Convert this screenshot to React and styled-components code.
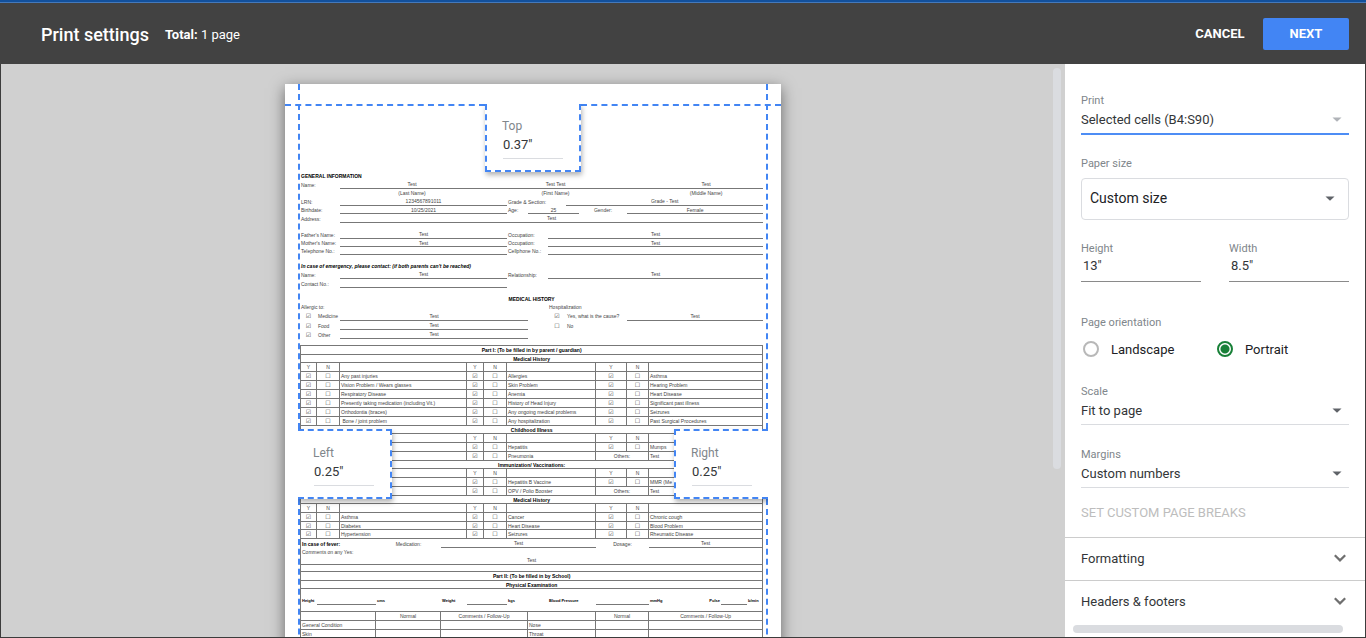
import { useState } from "react"
import styled, { createGlobalStyle, css } from "styled-components"

const GlobalStyle = createGlobalStyle`
*{
    box-sizing: border-box;
}
body{
    margin: 0;
    font-family: Roboto, "Liberation Sans", sans-serif;
    color: #333638;
}
button, input, select{
    font-family: inherit;
    color: inherit;
}
`

const Page = styled.div`
height: 100vh;
display: flex;
flex-direction: column;
overflow: hidden;
`
const TopStrip = styled.div`
height: 3px;
flex-shrink: 0;
background-color: #12509c;
border-bottom: 1px solid #4579ba;
`
const Header = styled.header`
height: 61px;
flex-shrink: 0;
display: flex;
align-items: center;
background-color: #424242;
color: #fff;
padding: 0 17px 0 41px;
`
const Title = styled.h1`
margin: 0;
padding-top: 2px;
font-size: 18px;
font-weight: 500;
line-height: 24px;
`
const Total = styled.p`
margin: 0 auto 0 16px;
padding-top: 2px;
font-size: 13px;
line-height: 20px;
`
const HeaderButton = styled.button`
height: 32px;
min-width: 86px;
border: 0;
border-radius: 2px;
padding: 0 18px;
background-color: ${({ $primary }) => ($primary ? "#4285f4" : "transparent")};
color: #fff;
font-size: 13px;
font-weight: 700;
cursor: pointer;
`
const Main = styled.main`
flex: 1;
min-height: 0;
display: flex;
border: solid #3c3c3c;
border-width: 0 1px 1px;
`

/* preview */
const Preview = styled.section`
flex: 1;
position: relative;
display: flex;
justify-content: center;
padding-top: 20px;
background-color: #d0d0d0;
overflow: hidden;
`
const VerticalThumb = styled.div`
position: absolute;
top: 4px;
right: 4px;
width: 8px;
height: 70%;
border-radius: 4px;
background-color: #dadce0;
`
const Paper = styled.div`
position: relative;
width: 496px;
height: 760px;
flex-shrink: 0;
padding: 87px 18px 0 15px;
background-color: #fff;
box-shadow: 0 4px 14px rgba(0, 0, 0, 0.5);
`
const Guide = styled.div`
position: absolute;
border: 0 dashed #4285f4;
${({ $row }) =>
  $row
    ? css`
top: 20px;
width: 200px;
border-top-width: 2px;
${$row}: 0;
`
    : css`
border-left-width: 2px;
`}
${({ $col }) => $col === "left" && css`left: 13px;`}
${({ $col }) => $col === "right" && css`right: 13px;`}
${({ $part }) => $part === "upper" && css`top: 0; height: 345px;`}
${({ $part }) => $part === "lower" && css`top: 415px; bottom: 0;`}
`
const openSide = { top: "top", left: "left", right: "right" }
const MarginBox = styled.label`
position: absolute;
display: flex;
flex-direction: column;
padding: 14px 15px 0;
background-color: #fff;
border: 2px dashed #4285f4;
border-${({ $side }) => openSide[$side]}: 0;
box-shadow: 1px 3px 5px rgba(0, 0, 0, 0.3);
clip-path: inset(${({ $side }) =>
  $side === "top" ? "0 -12px -12px -12px" : $side === "left" ? "-12px -12px -12px 0" : "-12px 0 -12px -12px"});
color: #80868b;
font-size: 12px;
line-height: 16px;
${({ $side }) => $side === "top" && css`top: 20px; left: 200px; width: 96px; height: 68px;`}
${({ $side }) => $side === "left" && css`top: 345px; left: 13px; width: 94px; height: 70px;`}
${({ $side }) => $side === "right" && css`top: 345px; right: 13px; width: 94px; height: 70px;`}
`
const MarginInput = styled.input`
width: 60px;
height: 25px;
margin-left: 1px;
padding: 0 0 4px;
border: 0;
border-bottom: 1px solid #dadce0;
background: transparent;
color: #333638;
font-size: 13px;
outline: none;
`

/* sheet */
const Sheet = styled.table`
width: 463px;
table-layout: fixed;
border-collapse: separate;
border-spacing: 0;
font-family: "Liberation Sans", Arial, sans-serif;
font-size: 5px;
line-height: 6px;
color: #444;
white-space: nowrap;
`
const Col = styled.col`
width: ${({ $w }) => $w}px;
`
const SheetRow = styled.tr`
height: ${({ $h }) => $h}px;
`
const Cell = styled.td`
padding: 0 1px;
border: 0 solid #777;
vertical-align: middle;
text-align: ${({ $f }) => ($f.includes("c") ? "center" : "left")};
${({ $f }) => $f.includes("b") && css`font-weight: 700; color: #000;`}
${({ $f }) => $f.includes("i") && css`font-style: italic;`}
${({ $f }) => $f.includes("s") && css`font-size: 4px;`}
${({ $f }) => $f.includes("u") && css`border-bottom-width: 1px;`}
${({ $f }) => $f.includes("l") && css`border-left-width: 1px;`}
${({ $f }) => $f.includes("r") && css`border-right-width: 1px;`}
`
const Mark = styled.span`
font-family: "DejaVu Sans", sans-serif;
font-size: 6px;
line-height: 6px;
display: block;
`
const Vitals = styled.div`
display: flex;
justify-content: space-between;
`

const columns = [17, 23, 36, 65, 26, 17, 23, 21, 20, 18, 13, 17, 31, 22, 72, 26, 16]
const ON = "☑"
const OFF = "☐"

// a cell is [span, text, flags]
// b bold, i italic, s small, c centre, u underline, l left line, r right line
const blank = (h, flags = "") => [h, [[17, "", flags]]]
const heading = (h, text) => [h, [[17, text, "bculr"]]]
const yn = (h, first = true) => [h, [
  [1, first ? "Y" : "", "culr"], [1, first ? "N" : "", "cur"], [3, "", "ur"],
  [1, "Y", "cur"], [1, "N", "cur"], [5, "", "ur"],
  [1, "Y", "cur"], [1, "N", "cur"], [3, "", "ur"],
]]
const checks = (h, a, b, c) => [h, [
  [1, a && ON, "culr"], [1, a && OFF, "cur"], [3, a, "ur"],
  [1, ON, "cur"], [1, OFF, "cur"], [5, b, "ur"],
  [1, ON, "cur"], [1, OFF, "cur"], [3, c, "ur"],
]]
const others = (h, b) => [h, [
  [1, "", "ulr"], [1, "", "ur"], [3, "", "ur"],
  [1, ON, "cur"], [1, OFF, "cur"], [5, b, "ur"],
  [2, "Others:", "cur"], [3, "Test", "ur"],
]]
const pair = (h, a, av, b, bv) => [h, [
  [2, a, ""], [5, av, "cu"], [2, b, ""], [8, bv, "cu"],
]]

const rows = [
  [9, [[17, "GENERAL INFORMATION", "b"]]],
  [9, [[2, "Name:", ""], [4, "Test", "cu"], [7, "Test Test", "cu"], [1, "", "u"], [3, "Test", "cu"]]],
  [8, [[2, "", ""], [4, "(Last Name)", "c"], [7, "(First Name)", "c"], [1, "", ""], [3, "(Middle Name)", "c"]]],
  [9, [[2, "LRN:", ""], [5, "1234567891011", "cu"], [3, "Grade & Section:", ""], [7, "Grade - Test", "cu"]]],
  [8, [[2, "Birthdate:", ""], [5, "10/25/2021", "cu"], [1, "Age:", ""], [3, "25", "cu"], [2, "Gender:", "c"], [4, "Female", "cu"]]],
  [9, [[2, "Address:", ""], [15, "Test", "cu"]]],
  blank(7),
  pair(9, "Father's Name:", "Test", "Occupation:", "Test"),
  pair(8, "Mother's Name:", "Test", "Occupation:", "Test"),
  pair(8, "Telephone No.:", "", "Cellphone No.:", ""),
  blank(7),
  [8, [[17, "In case of emergency, please contact: (if both parents can't be reached)", "bi"]]],
  pair(9, "Name:", "Test", "Relationship:", "Test"),
  [9, [[2, "Contact No.:", ""], [5, "", "u"], [10, "", ""]]],
  blank(7),
  [8, [[17, "MEDICAL HISTORY", "bc"]]],
  [8, [[9, "Allergic to:", ""], [8, "Hospitalization", ""]]],
  [10, [[1, ON, "c"], [1, "Medicine", ""], [6, "Test", "cu"], [1, "", ""], [1, ON, "c"], [3, "Yes, what is the cause?", ""], [4, "Test", "cu"]]],
  [9, [[1, ON, "c"], [1, "Food", ""], [6, "Test", "cu"], [1, "", ""], [1, OFF, "c"], [7, "No", ""]]],
  [9, [[1, ON, "c"], [1, "Other", ""], [6, "Test", "cu"], [9, "", ""]]],
  blank(7, "u"),
  heading(9, "Part I: (To be filled in by parent / guardian)"),
  heading(8, "Medical History"),
  yn(9),
  checks(9, "Any past injuries", "Allergies", "Asthma"),
  checks(9, "Vision Problem / Wears glasses", "Skin Problem", "Hearing Problem"),
  checks(9, "Respiratory Disease", "Anemia", "Heart Disease"),
  checks(9, "Presently taking medication (including Vit.)", "History of Head Injury", "Significant past illness"),
  checks(9, "Orthodontia (braces)", "Any ongoing medical problems", "Seizures"),
  checks(9, "\u00a0Bone / joint problem", "Any hospitalization", "Past Surgical Procedures"),
  heading(8, "Childhood Illness"),
  yn(9, false),
  checks(9, "", "Hepatitis", "Mumps"),
  others(9, "Pneumonia"),
  heading(8, "Immunization/ Vaccinations:"),
  yn(9, false),
  checks(9, "", "Hepatitis B Vaccine", "MMR (Me"),
  others(9, "OPV / Polio Booster"),
  heading(8, "Medical History"),
  yn(9),
  checks(9, "Asthma", "Cancer", "Chronic cough"),
  checks(8, "Diabetes", "Heart Disease", "Blood Problem"),
  checks(9, "Hypertension", "Seizures", "Rheumatic Disease"),
  [9, [[3, "In case of fever:", "bl"], [1, "Medication:", "c"], [8, "Test", "cu"], [2, "Dosage:", "c"], [3, "Test", "cur"]]],
  [8, [[17, "Comments on any Yes:", "lr"]]],
  [9, [[17, "Test", "culr"]]],
  blank(7, "ulr"),
  heading(9, "Part II: (To be filled in by School)"),
  heading(8, "Physical Examination"),
  blank(8, "lr"),
  [8, [
    [1, "Height", "bsl"], [2, "", "u"], [1, "cms", "bs"],
    [1, "Weight", "bs"], [2, "", "u"], [2, "kgs", "bs"],
    [3, "Blood Pressure", "bs"], [2, "", "u"], [1, ["mmHg", "Pulse"], "bs"],
    [1, "", "u"], [1, "b/min", "bsr"],
  ]],
  blank(7, "ulr"),
  [9, [[3, "", "ulr"], [1, "Normal", "cur"], [4, "Comments / Follow-Up", "cur"], [4, "", "ur"], [2, "Normal", "cur"], [3, "Comments / Follow-Up", "cur"]]],
  [9, [[3, "General Condition", "ulr"], [1, "", "ur"], [4, "", "ur"], [4, "Nose", "ur"], [2, "", "ur"], [3, "", "ur"]]],
  [8, [[3, "Skin", "ulr"], [1, "", "ur"], [4, "", "ur"], [4, "Throat", "ur"], [2, "", "ur"], [3, "", "ur"]]],
]

/* settings */
const Settings = styled.aside`
position: relative;
width: 300px;
flex-shrink: 0;
background-color: #fff;
overflow: hidden;
`
const Form = styled.form`
display: flex;
flex-direction: column;
padding: 28px 16px 16px;
`
const Field = styled.div`
display: flex;
flex-direction: column;
flex: 1;
margin-bottom: ${({ $gap }) => $gap || 0}px;
`
const Label = styled.label`
padding-top: 2px;
font-size: 11px;
line-height: 14px;
color: #80868b;
`
const SelectWrap = styled.div`
display: grid;
align-items: center;
margin-top: ${({ $boxed }) => ($boxed ? "7px" : "0")};
& > *{
    grid-area: 1 / 1;
}
& > svg{
    justify-self: end;
    margin-right: ${({ $boxed }) => ($boxed ? "14px" : "7px")};
    margin-bottom: ${({ $boxed }) => ($boxed ? "1px" : "4px")};
    pointer-events: none;
}
`
const Select = styled.select`
appearance: none;
width: 100%;
height: ${({ $active }) => ($active ? "27px" : "26px")};
padding: 0 0 2px;
border: 0;
border-bottom: ${({ $active }) => ($active ? "2px solid #4d8df5" : "1px solid #dadce0")};
border-radius: 0;
background-color: transparent;
font-size: 13px;
outline: none;
${({ $boxed }) =>
  $boxed &&
  css`
height: 42px;
padding: 0 8px 2px;
border: 1px solid #dadce0;
border-radius: 4px;
font-size: 14px;
color: #202124;
`}
`
const Sizes = styled.div`
display: flex;
gap: 28px;
margin-bottom: 32px;
`
const SizeInput = styled.input`
width: 100%;
height: 26px;
padding: 0 2px 6px;
border: 0;
border-bottom: 1px solid #8a8a8a;
font-size: 13px;
outline: none;
`
const Orientation = styled.fieldset`
margin: 0 0 24px;
padding: 0;
border: 0;
`
const Legend = styled.legend`
padding: 2px 0 0;
font-size: 11px;
line-height: 14px;
color: #80868b;
`
const Radios = styled.div`
display: grid;
grid-template-columns: 1fr 1fr;
margin-top: 9px;
`
const RadioLabel = styled.label`
display: flex;
align-items: center;
gap: 12px;
padding-left: 2px;
height: 20px;
font-size: 13px;
color: #202124;
`
const Radio = styled.input`
appearance: none;
width: 16px;
height: 16px;
margin: 0;
border: 2px solid #b8b8b8;
border-radius: 50%;
&:checked{
    border-color: #188038;
    background: radial-gradient(#188038 4px, transparent 5px);
}
`
const BreaksButton = styled.button`
align-self: flex-start;
height: 16px;
margin-top: 17px;
padding: 0;
border: 0;
background: none;
font-size: 13px;
line-height: 16px;
&:disabled{
    color: #bdbdbd;
}
`
const Section = styled.button`
width: 100%;
height: 43px;
display: flex;
align-items: center;
justify-content: space-between;
padding: 0 18px 2px 16px;
border: 0;
border-top: 1px solid #ccc;
background: none;
font-size: 13px;
cursor: pointer;
`
const HorizontalThumb = styled.div`
position: absolute;
left: 8px;
bottom: 4px;
width: 90%;
height: 8px;
border-radius: 4px;
background-color: #dadce0;
`

const Caret = ({ color = "#5f6368" }) => (
  <svg width="10" height="5" viewBox="0 0 10 5" aria-hidden="true">
    <path d="M0.5 0.5h9L5 4.8z" fill={color} />
  </svg>
)

const Chevron = () => (
  <svg width="14" height="14" viewBox="0 0 14 14" aria-hidden="true">
    <path d="M1.8 4.2L7 9.4l5.2-5.2" fill="none" stroke="#6f6f6f" strokeWidth="2.2" />
  </svg>
)

const Dropdown = ({ id, label, value, gap, active, boxed }) => (
  <Field $gap={gap}>
    <Label htmlFor={id}>{label}</Label>
    <SelectWrap $boxed={boxed}>
      <Select id={id} $active={active} $boxed={boxed} defaultValue={value}>
        <option>{value}</option>
      </Select>
      <Caret color={active ? "#b0b3b8" : undefined} />
    </SelectWrap>
  </Field>
)

const Size = ({ id, label, value }) => (
  <Field>
    <Label htmlFor={id}>{label}</Label>
    <SizeInput id={id} defaultValue={value} />
  </Field>
)

const CellContent = ({ text }) => {
  if (Array.isArray(text)) {
    return (
      <Vitals>
        {text.map((t) => (
          <span key={t}>{t}</span>
        ))}
      </Vitals>
    )
  }
  if (text === ON || text === OFF) return <Mark>{text}</Mark>
  return text
}

const SheetPreview = () => (
  <Sheet>
    <colgroup>
      {columns.map((w, i) => (
        <Col key={i} $w={w} />
      ))}
    </colgroup>
    <tbody>
      {rows.map(([h, cells], i) => (
        <SheetRow key={i} $h={h}>
          {cells.map(([span, text, flags], j) => (
            <Cell key={j} colSpan={span} $f={flags}>
              <CellContent text={text} />
            </Cell>
          ))}
        </SheetRow>
      ))}
    </tbody>
  </Sheet>
)

const App = () => {
  const [orientation, setOrientation] = useState("Portrait")

  return (
    <Page>
      <GlobalStyle />
      <TopStrip />
      <Header>
        <Title>Print settings</Title>
        <Total>
          <b>Total:</b> 1 page
        </Total>
        <HeaderButton>CANCEL</HeaderButton>
        <HeaderButton $primary>NEXT</HeaderButton>
      </Header>
      <Main>
        <Preview>
          <Paper>
            <SheetPreview />
            <Guide $row="left" />
            <Guide $row="right" />
            <Guide $col="left" $part="upper" />
            <Guide $col="left" $part="lower" />
            <Guide $col="right" $part="upper" />
            <Guide $col="right" $part="lower" />
            <MarginBox $side="top">
              Top
              <MarginInput defaultValue={'0.37"'} />
            </MarginBox>
            <MarginBox $side="left">
              Left
              <MarginInput defaultValue={'0.25"'} />
            </MarginBox>
            <MarginBox $side="right">
              Right
              <MarginInput defaultValue={'0.25"'} />
            </MarginBox>
          </Paper>
          <VerticalThumb />
        </Preview>
        <Settings>
          <Form>
            <Dropdown id="print" label="Print" value="Selected cells (B4:S90)" gap={20} active />
            <Dropdown id="paper" label="Paper size" value="Custom size" gap={20} boxed />
            <Sizes>
              <Size id="height" label="Height" value={'13"'} />
              <Size id="width" label="Width" value={'8.5"'} />
            </Sizes>
            <Orientation>
              <Legend>Page orientation</Legend>
              <Radios>
                {["Landscape", "Portrait"].map((name) => (
                  <RadioLabel key={name}>
                    <Radio
                      type="radio"
                      name="orientation"
                      checked={orientation === name}
                      onChange={() => setOrientation(name)}
                    />
                    {name}
                  </RadioLabel>
                ))}
              </Radios>
            </Orientation>
            <Dropdown id="scale" label="Scale" value="Fit to page" gap={21} />
            <Dropdown id="margins" label="Margins" value="Custom numbers" />
            <BreaksButton type="button" disabled>
              SET CUSTOM PAGE BREAKS
            </BreaksButton>
          </Form>
          <Section>
            Formatting
            <Chevron />
          </Section>
          <Section>
            Headers &amp; footers
            <Chevron />
          </Section>
          <HorizontalThumb />
        </Settings>
      </Main>
    </Page>
  )
}

export default App
